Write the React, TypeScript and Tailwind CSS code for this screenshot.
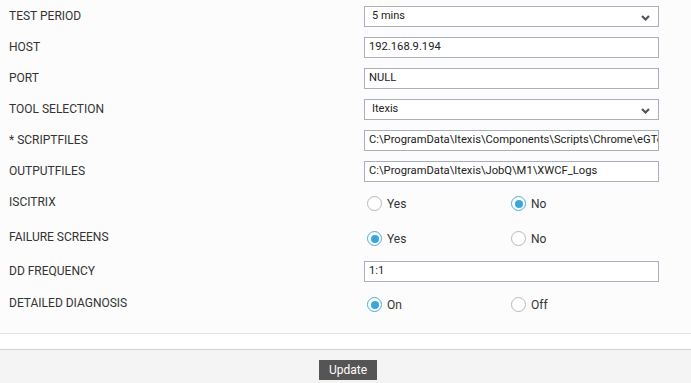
import React from "react"

const font = { fontFamily: "Roboto, 'Liberation Sans', sans-serif" }

function Chevron() {
  return (
    <svg width="9" height="6" viewBox="0 0 9 6" className="absolute right-[8px] top-[8px]">
      <polyline points="1,1 4.5,4.5 8,1" fill="none" stroke="#555" strokeWidth="2.2" />
    </svg>
  )
}

function Select({ value }: { value: string }) {
  return (
    <div className="relative w-[295px] h-[21px] border border-[#a9afbd] bg-white flex items-center pl-[7px] text-[11px] text-[#222]">
      {value}
      <Chevron />
    </div>
  )
}

function Input({ value }: { value: string }) {
  return (
    <div className="w-[295px] h-[21px] border border-[#a9afbd] bg-white flex items-center pl-[4px] pr-[1px] text-[11.2px] text-[#222] overflow-hidden whitespace-nowrap">
      {value}
    </div>
  )
}

function Radio({ label, checked }: { label: string; checked?: boolean }) {
  return (
    <div className="w-[144px] flex items-center gap-[5px] pt-[2px] pl-[3px]">
      <span
        className={
          checked
            ? "w-[15px] h-[15px] rounded-full border border-[#47aede] bg-white flex items-center justify-center"
            : "w-[15px] h-[15px] rounded-full border border-[#b4b8bf] bg-white"
        }
      >
        {checked && <span className="w-[8px] h-[8px] rounded-full bg-[#3aa7db]" />}
      </span>
      <span className="text-[12px] text-[#333]">{label}</span>
    </div>
  )
}

const rows: { label: string; mt: string; control: React.ReactNode }[] = [
  { label: "TEST PERIOD", mt: "mt-[6px]", control: <Select value="5 mins" /> },
  { label: "HOST", mt: "mt-[10px]", control: <Input value="192.168.9.194" /> },
  { label: "PORT", mt: "mt-[10px]", control: <Input value="NULL" /> },
  { label: "TOOL SELECTION", mt: "mt-[10px]", control: <Select value="Itexis" /> },
  {
    label: "* SCRIPTFILES",
    mt: "mt-[10px]",
    control: <Input value="C:\ProgramData\Itexis\Components\Scripts\Chrome\eGTest" />,
  },
  { label: "OUTPUTFILES", mt: "mt-[10px]", control: <Input value="C:\ProgramData\Itexis\JobQ\M1\XWCF_Logs" /> },
  {
    label: "ISCITRIX",
    mt: "mt-[10px]",
    control: (
      <>
        <Radio label="Yes" />
        <Radio label="No" checked />
      </>
    ),
  },
  {
    label: "FAILURE SCREENS",
    mt: "mt-[14px]",
    control: (
      <>
        <Radio label="Yes" checked />
        <Radio label="No" />
      </>
    ),
  },
  { label: "DD FREQUENCY", mt: "mt-[13px]", control: <Input value="1:1" /> },
  {
    label: "DETAILED DIAGNOSIS",
    mt: "mt-[11px]",
    control: (
      <>
        <Radio label="On" checked />
        <Radio label="Off" />
      </>
    ),
  },
]

export default function App() {
  return (
    <div className="w-[691px] h-[383px] bg-[#fcfcfc] flex flex-col overflow-hidden" style={font}>
      <div className="h-[333px] flex flex-col">
        {rows.map((r) => (
          <div key={r.label} className={`${r.mt} h-[21px] flex items-center`}>
            <div className="w-[364px] pl-[9px] text-[12px] text-[#333] -mt-[1px]">{r.label}</div>
            <div className="flex items-center">{r.control}</div>
          </div>
        ))}
      </div>
      <div className="h-[16px] border-t border-[#e2e2e2] bg-white" />
      <div className="flex-1 border-t border-[#d2d2d2] bg-[#f4f4f4] flex justify-center pl-[5px] pt-[10px]">
        <button className="w-[58px] h-[20px] bg-[#555555] text-white text-[12px]">Update</button>
      </div>
    </div>
  )
}
